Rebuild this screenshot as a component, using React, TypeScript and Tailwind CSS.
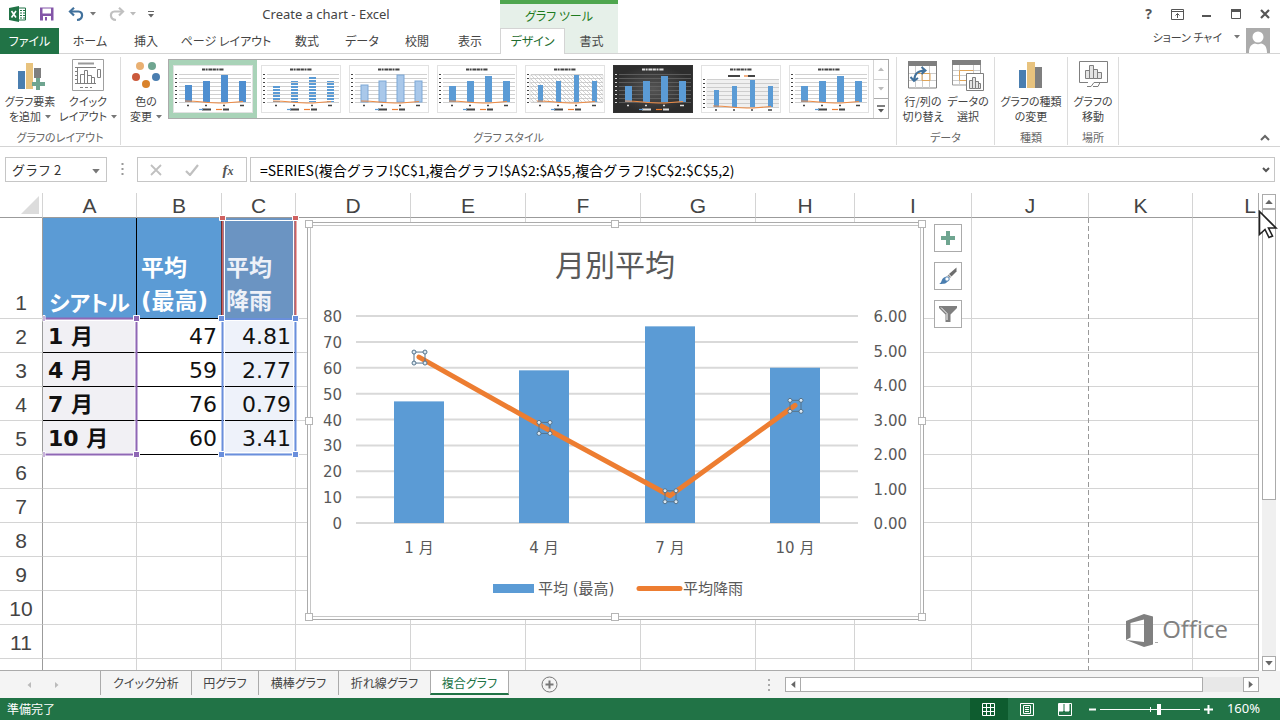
import * as React from 'react'

const columns = [
  { name: 'A', width: 94 },
  { name: 'B', width: 85 },
  { name: 'C', width: 74 },
  { name: 'D', width: 115 },
  { name: 'E', width: 115 },
  { name: 'F', width: 115 },
  { name: 'G', width: 115 },
  { name: 'H', width: 99 },
  { name: 'I', width: 117 },
  { name: 'J', width: 117 },
  { name: 'K', width: 104 },
  { name: 'L', width: 115 },
]

const data = [
  { month: '1 月', high: 47, rain: 4.81 },
  { month: '4 月', high: 59, rain: 2.77 },
  { month: '7 月', high: 76, rain: 0.79 },
  { month: '10 月', high: 60, rain: 3.41 },
]

const ribbonTabs = [
  { label: 'ホーム', className: 'w-[62px]' },
  { label: '挿入', className: 'w-[50px]' },
  { label: 'ページ レイアウト', className: 'w-[110px]' },
  { label: '数式', className: 'w-[52px]' },
  { label: 'データ', className: 'w-[58px]' },
  { label: '校閲', className: 'w-[52px]' },
  { label: '表示', className: 'w-[54px]' },
]

const sheetTabs = [
  { label: 'クイック分析', className: 'w-[91px]' },
  { label: '円グラフ', className: 'w-[67px]' },
  { label: '横棒グラフ', className: 'w-[80px]' },
  { label: '折れ線グラフ', className: 'w-[92px]' },
]

function Caret({ className = 'h-1 w-[6px] text-[#777]' }: { className?: string }) {
  return (
    <svg viewBox="0 0 6 4" className={`inline-block shrink-0 ${className}`} aria-hidden="true">
      <path d="M0 0h6L3 3.5z" fill="currentColor" />
    </svg>
  )
}

/* ---------- Title bar ---------- */

function QuickAccess() {
  return (
    <div className="flex items-center w-[160px] shrink-0 pl-[9px]">
      <svg width="18" height="16" viewBox="0 0 18 16" aria-hidden="true">
        <path d="M9 2h7.5v12H9" fill="#fff" stroke="#217346" />
        <path d="M11 4.500h2M14 4.500h2M11 7h2M14 7h2M11 9.500h2M14 9.500h2M11 12h2M14 12h2" stroke="#217346" />
        <path d="M0 2L10 0v16L0 14z" fill="#217346" />
        <path d="M2.500 5l4.500 6.500M7 5l-4.500 6.500" stroke="#fff" strokeWidth="1.600" />
      </svg>
      <button aria-label="上書き保存" className="ml-3">
        <svg width="16" height="16" viewBox="0 0 16 16">
          <path d="M1 1.500h13.500v13H1z" fill="#8355a8" />
          <path d="M3.500 2.500h8.500v5H3.500z" fill="#fff" />
          <path d="M4 10h8v5H4z" fill="#fff" />
          <path d="M6 11h2v3.500H6z" fill="#8355a8" />
        </svg>
      </button>
      <button aria-label="元に戻す" className="ml-[13px] flex items-center gap-[5px]">
        <svg width="17" height="15" viewBox="0 0 17 15" fill="none" stroke="#41719c" strokeWidth="2.200">
          <path d="M2 4.500h8.500c5 0 5 8-1.500 8.500" />
          <path d="M6 .8L2 4.500l4 4" />
        </svg>
        <Caret />
      </button>
      <button aria-label="やり直し" className="ml-3 flex items-center gap-[5px]">
        <svg width="17" height="15" viewBox="0 0 17 15" fill="none" stroke="#c0c0c0" strokeWidth="2.200">
          <path d="M15 4.500H6.500c-5 0-5 8 1.500 8.500" />
          <path d="M11 .8l4 3.700-4 4" />
        </svg>
        <Caret className="h-1 w-[6px] text-[#bbb]" />
      </button>
      <button aria-label="クイック アクセス ツール バー" className="ml-3">
        <svg width="6" height="7" viewBox="0 0 6 7">
          <path d="M0 .5h6" stroke="#666" />
          <path d="M0 3h6L3 6.500z" fill="#666" />
        </svg>
      </button>
    </div>
  )
}

function WindowControls() {
  return (
    <div className="ml-auto flex items-center pr-px text-[#555] [&>button]:flex [&>button]:w-[29px] [&>button]:h-7 [&>button]:items-center [&>button]:justify-center">
      <button aria-label="ヘルプ" className="font-['Noto_Sans'] font-bold text-sm">?</button>
      <button aria-label="リボンの表示オプション">
        <svg width="13" height="11" viewBox="0 0 13 11" fill="none" stroke="currentColor">
          <path d="M.5.5h12v10H.5zM.5 2.500h12M6.500 9V4.500M4.500 6.500l2-2 2 2" />
        </svg>
      </button>
      <button aria-label="最小化">
        <svg width="9" height="11" viewBox="0 0 9 11"><path d="M0 7h9" stroke="currentColor" strokeWidth="2" /></svg>
      </button>
      <button aria-label="元に戻す (縮小)">
        <svg width="10" height="10" viewBox="0 0 10 10" fill="none" stroke="currentColor">
          <path d="M.5.5h9v9h-9z" />
          <path d="M0 1.500h10" strokeWidth="3" />
        </svg>
      </button>
      <button aria-label="閉じる">
        <svg width="10" height="10" viewBox="0 0 10 10"><path d="M1 1l8 8M9 1L1 9" stroke="currentColor" strokeWidth="2.200" /></svg>
      </button>
    </div>
  )
}

function Header() {
  return (
    <header className="shrink-0">
      <div className="flex h-7">
        <div className="flex w-[500px] shrink-0">
          <QuickAccess />
          <h1 className="flex-1 pr-2 text-center font-['Noto_Sans'] text-[13px] leading-7 text-[#444]">Create a chart - Excel</h1>
        </div>
        <div className="w-[118px] shrink-0 border-t-4 border-[#4ea64e] bg-[#e6f0e9] text-center text-xs leading-6 text-[#1e7b1e]">グラフ ツール</div>
        <WindowControls />
      </div>
      <div className="flex h-[26px] text-xs text-[#444]">
        <nav className="flex w-[500px] shrink-0 border-b border-[#d4d4d4]">
          <button className="-mb-px w-[59px] shrink-0 bg-[#217346] text-white">ファイル</button>
          {ribbonTabs.map((t) => (
            <button key={t.label} className={`shrink-0 whitespace-nowrap ${t.className}`}>{t.label}</button>
          ))}
        </nav>
        <button className="w-[65px] shrink-0 border-x border-t border-[#d4d4d4] bg-white pb-[2px] text-[#1e6b2e]">デザイン</button>
        <button className="w-[53px] shrink-0 border-b border-[#d4d4d4] bg-[#e6f0e9]">書式</button>
        <div className="flex flex-1 items-start justify-end border-b border-[#d4d4d4] pr-[10px]">
          <button className="flex items-center gap-3 whitespace-nowrap text-[11px] leading-[18px]">
            ショーン チャイ
            <Caret />
          </button>
          <svg width="24" height="25" viewBox="0 0 24 25" className="ml-[6px]" aria-hidden="true">
            <path d="M0 0h24v25H0z" fill="#ababab" />
            <circle cx="12" cy="9" r="5.500" fill="#fff" />
            <path d="M3 25c0-7 3-9 6-9.500 2 1 4 1 6 0 3 .5 6 2.500 6 9.500z" fill="#fff" />
          </svg>
        </div>
      </div>
    </header>
  )
}

/* ---------- Ribbon ---------- */

function Group({ label, className = '', children }: { label: string; className?: string; children: React.ReactNode }) {
  return (
    <section className={`mb-px mt-[3px] flex flex-col justify-between border-r border-[#dcdcdc] ${className}`}>
      <div className="flex pt-[2px]">{children}</div>
      <h2 className="text-center text-[11px] leading-4 text-[#666]">{label}</h2>
    </section>
  )
}

type BigButtonProps = { lines: [string, string]; caret?: boolean; className?: string; children: React.ReactNode }

function BigButton({ lines, caret, className = '', children }: BigButtonProps) {
  return (
    <button className={`flex shrink-0 flex-col items-center whitespace-nowrap text-[11px] leading-[15px] text-[#444] ${className}`}>
      <span className="mb-[3px] flex h-8 items-center">{children}</span>
      <span>{lines[0]}</span>
      <span className="flex items-center gap-1">
        {lines[1]}
        {caret && <Caret />}
      </span>
    </button>
  )
}

type ThumbVariant = 'solid' | 'striped' | 'pale' | 'gradient' | 'hatched' | 'dark' | 'legendTop' | 'wide'

const thumbs: ThumbVariant[] = ['solid', 'striped', 'pale', 'gradient', 'hatched', 'dark', 'legendTop', 'wide']

function Thumb({ variant }: { variant: ThumbVariant }) {
  const dark = variant === 'dark'
  const top = variant === 'legendTop'
  const ink = dark ? '#ddd' : '#444'
  const base = top ? 42 : 37
  const barWidth = variant === 'hatched' || top ? 5 : 7
  const heights = variant === 'striped' || variant === 'gradient' || dark || variant === 'wide' ? [16, 21, 26, 21] : [17, 21, 27, 21]
  const line = dark ? '#666' : '#c4c4c4'
  const fill =
    variant === 'striped' ? 'url(#thumb-stripes)' : variant === 'pale' ? '#a9c8ea' : variant === 'solid' ? '#4f8fd0' : '#5b9bd5'
  return (
    <svg width="80" height="48" viewBox="0 0 80 48" aria-hidden="true">
      <defs>
        <pattern id="thumb-stripes" width="8" height="3" patternUnits="userSpaceOnUse">
          <path d="M0 0h8v2H0z" fill="#5b9bd5" />
        </pattern>
        <pattern id="thumb-hatch" width="4" height="4" patternUnits="userSpaceOnUse">
          <path d="M0 0l4 4" stroke="#c8c8c8" strokeWidth=".8" />
        </pattern>
        <radialGradient id="thumb-dark">
          <stop offset="0" stopColor="#555" />
          <stop offset="1" stopColor="#2d2d2d" />
        </radialGradient>
      </defs>
      <rect x=".5" y=".5" width="79" height="47" fill={dark ? 'url(#thumb-dark)' : '#fff'} stroke={dark ? '#333' : '#e2e2e2'} />
      <path d="M29 4.500h22" stroke={ink} strokeWidth="2" strokeDasharray="3 .6 2 .8 4 .5" />
      {top && <path d="M5 15h73v27H5z" fill="#f0f0f0" />}
      {variant === 'hatched' && <path d="M5 10h73v27H5z" fill="url(#thumb-hatch)" stroke="#d0d0d0" strokeWidth=".6" />}
      {[0, 1, 2, 3, 4, 5, 6, 7].map((i) => (
        <g key={i}>
          <path d={`M6 ${base - i * 4 + 0.5}h72`} stroke={line} strokeWidth=".8" />
          <path d={`M2 ${base - i * 4 + 0.5}h2`} stroke={ink} />
        </g>
      ))}
      {heights.map((h, i) => (
        <rect
          key={i}
          x={15 + i * 18 - Math.floor(barWidth / 2)}
          y={base - h}
          width={barWidth}
          height={h}
          fill={fill}
          stroke={variant === 'pale' ? '#7da7d6' : 'none'}
        />
      ))}
      <path d={`M12 ${base - 1}q9 0 18 1t22 1l18-1.500`} fill="none" stroke="#ed8b45" strokeWidth="1.200" />
      {!top && <path d="M14 40.500h2M32 40.500h2M50 40.500h2M67 40.500h4" stroke={ink} strokeWidth="1.600" />}
      {top && <path d="M14 45h2M32 45h2M50 45h2M67 45h4" stroke={ink} strokeWidth="1.600" />}
      <path d={top ? 'M27 11h12M47 11h7' : 'M29 44.500h9M50 44.500h6'} stroke={ink} strokeWidth="1.800" />
      <path d={top ? 'M43 11h4' : 'M43 44.500h6'} stroke="#ed7d31" strokeWidth="1.200" />
      {!top && <path d="M26 44.500h4" stroke="#5b9bd5" strokeWidth="1.200" />}
    </svg>
  )
}

function StyleGallery() {
  return (
    <div className="ml-px flex h-[60px] border border-[#ababab]">
      {thumbs.map((variant, i) => (
        <button
          key={variant}
          aria-label={`スタイル ${i + 1}`}
          className={`flex w-[88px] shrink-0 items-center justify-center ${i === 0 ? 'bg-[#a9d3b8]' : ''}`}
        >
          <Thumb variant={variant} />
        </button>
      ))}
      <div className="flex w-[15px] flex-col border-l border-[#d4d4d4] [&>button]:flex [&>button]:flex-1 [&>button]:items-center [&>button]:justify-center">
        <button aria-label="前の行"><Caret className="h-1 w-[6px] rotate-180 text-[#bbb]" /></button>
        <button aria-label="次の行" className="border-t border-[#d4d4d4]"><Caret className="h-1 w-[6px] text-[#bbb]" /></button>
        <button aria-label="その他" className="border-t border-[#ababab]">
          <svg width="8" height="8" viewBox="0 0 8 8">
            <path d="M0 1h8" stroke="#555" strokeWidth="1.500" />
            <path d="M1 4h6L4 7.500z" fill="#555" />
          </svg>
        </button>
      </div>
    </div>
  )
}

function Ribbon() {
  return (
    <div className="flex h-[93px] shrink-0 border-b border-[#d4d4d4]">
      <Group label="グラフのレイアウト" className="w-[121px]">
        <BigButton lines={['グラフ要素', 'を追加']} caret className="w-[60px]">
          <svg width="30" height="30" viewBox="0 0 30 30">
            <path d="M3 11h7v18H3z" fill="#4a7eb0" />
            <path d="M11 3h7v26h-7z" fill="#e8c37e" />
            <path d="M19 8h7v10h-7z" fill="#7f7f7f" />
            <path d="M21 18h4v4h5v4h-5v4h-4v-4h-4v-4h4z" fill="#6fa590" />
          </svg>
        </BigButton>
        <BigButton lines={['クイック', 'レイアウト']} caret className="w-[56px]">
          <svg width="32" height="32" viewBox="0 0 32 32" fill="none" stroke="#7f7f7f">
            <path d="M.5.5h31v31H.5z" stroke="#a0a0a0" />
            <path d="M6 4.500h16" strokeWidth="2" stroke="#999" />
            <path d="M3 8.500h21M3 12.500h2M3 16.500h2M3 20.500h2M3 24.500h21M5.500 9v15" />
            <path d="M8.500 15.500h4v9h-4zM12.500 11.500h3v13h-3zM15.500 16.500h4v8h-4zM19.500 18.500h3v6h-3z" />
            <path d="M8 28.500h12" strokeDasharray="3 2" />
            <path d="M25.500 10.500h3v8h-3z" />
          </svg>
        </BigButton>
      </Group>
      <Group label="グラフ スタイル" className="w-[776px]">
        <BigButton lines={['色の', '変更']} caret className="ml-1 w-[42px]">
          <svg width="28" height="28" viewBox="0 0 28 28">
            <circle cx="8" cy="5" r="4" fill="#e9b072" />
            <circle cx="20" cy="5" r="4" fill="#6fa590" />
            <circle cx="4" cy="16" r="4" fill="#cb5a3c" />
            <circle cx="24" cy="16" r="4" fill="#4a7eb0" />
            <circle cx="14" cy="23" r="4" fill="#d9822b" />
          </svg>
        </BigButton>
        <StyleGallery />
      </Group>
      <Group label="データ" className="w-[98px]">
        <BigButton lines={['行/列の', '切り替え']} className="w-[52px]">
          <svg width="30" height="28" viewBox="0 0 30 28" fill="none">
            <path d="M.5 1v26h28V1" stroke="#7f7f7f" />
            <path d="M0 0h29v5H0z" fill="#7f7f7f" />
            <path d="M1 12.500h27M1 19.500h27M7.500 5v22M14.500 5v22M21.500 5v22" stroke="#ccc" />
            <path d="M14 12.500h8v7h-8zM7.500 12.500h7" stroke="#e0a558" />
            <path d="M6 19c1-7 4-9 11-9.500M13.500 6l4 3.500-4 3.500M2.500 16l3.500 4 4-3" stroke="#41719c" strokeWidth="2" />
          </svg>
        </BigButton>
        <BigButton lines={['データの', '選択']} className="w-[38px]">
          <svg width="32" height="31" viewBox="0 0 32 31" fill="none">
            <path d="M.5 1v24h14M28.500 1v12" stroke="#999" />
            <path d="M0 0h29v5H0z" fill="#7f7f7f" />
            <path d="M1 10.500h27M1 15.500h14M1 20.500h14M7.500 5v20M21.500 5v8" stroke="#ccc" />
            <path d="M14 20.500H7.500v-10h14" stroke="#e0a558" />
            <path d="M14.500 13.500h17v17h-17z" fill="#fff" stroke="#7f7f7f" />
            <path d="M17.500 20.500h3v8h-3zM20.500 17.500h3v11h-3zM23.500 21.500h3v7h-3zM26.500 23.500h2v5h-2z" fill="#e4e4e4" stroke="#7f7f7f" />
          </svg>
        </BigButton>
      </Group>
      <Group label="種類" className="w-[73px]">
        <BigButton lines={['グラフの種類', 'の変更']} className="w-[72px]">
          <svg width="24" height="28" viewBox="0 0 24 28">
            <path d="M0 9h7v18H0z" fill="#4a7eb0" />
            <path d="M8 1h8v26H8z" fill="#e8c37e" />
            <path d="M16 6h7v21h-7z" fill="#7f7f7f" />
          </svg>
        </BigButton>
      </Group>
      <Group label="場所" className="w-[51px]">
        <BigButton lines={['グラフの', '移動']} className="w-[50px]">
          <svg width="29" height="28" viewBox="0 0 29 28" fill="none" stroke="#7f7f7f">
            <path d="M9 21.500H.5V.5h28v21H21" />
            <path d="M6.500 9.500h4v8h-4zM10.500 4.500h4v13h-4zM14.500 8.500h4v9h-4zM18.500 11.500h4v6h-4z" fill="#e4e4e4" />
            <path d="M8 25.500h4l3-4h6l-2 4h-5" />
          </svg>
        </BigButton>
      </Group>
      <button aria-label="リボンを折りたたむ" className="ml-auto self-end px-[10px] pb-1">
        <svg width="10" height="8" viewBox="0 0 10 8"><path d="M1 6l4-4 4 4" fill="none" stroke="#666" strokeWidth="2" /></svg>
      </button>
    </div>
  )
}

/* ---------- Formula bar ---------- */

function FormulaBar() {
  return (
    <div className="flex h-[46px] shrink-0 items-start px-[5px] pt-[10px] text-[13px] text-[#333] [font-feature-settings:normal]">
      <div className="flex h-[25px] w-[102px] items-center border border-[#c6c6c6] pr-1">
        <input aria-label="名前ボックス" defaultValue="グラフ 2" className="min-w-0 flex-1 pl-[6px] text-[13px] outline-none" />
        <button aria-label="名前の一覧" className="px-[2px]"><Caret className="h-[5px] w-2 text-[#777]" /></button>
      </div>
      <svg width="3" height="13" viewBox="0 0 3 13" className="ml-[14px] mt-[6px]" aria-hidden="true">
        <path d="M1.500 0v13" stroke="#999" strokeWidth="2" strokeDasharray="2 3" />
      </svg>
      <div className="ml-[13px] flex h-[25px] w-[110px] items-center border border-[#c6c6c6] [&>button]:flex [&>button]:flex-1 [&>button]:justify-center">
        <button aria-label="キャンセル">
          <svg width="12" height="12" viewBox="0 0 12 12"><path d="M1 1l10 10M11 1L1 11" stroke="#c0c0c0" strokeWidth="1.800" /></svg>
        </button>
        <button aria-label="入力">
          <svg width="14" height="12" viewBox="0 0 14 12"><path d="M1 7l4 4 8-10" fill="none" stroke="#c0c0c0" strokeWidth="2.200" /></svg>
        </button>
        <button aria-label="関数の挿入" className="items-baseline font-['Liberation_Serif'] text-[15px] font-bold italic leading-5 text-[#555]">
          f<span className="text-xs">x</span>
        </button>
      </div>
      <div className="ml-[3px] flex h-[25px] flex-1 items-center border border-[#c6c6c6]">
        <input
          aria-label="数式バー"
          defaultValue="=SERIES(複合グラフ!$C$1,複合グラフ!$A$2:$A$5,複合グラフ!$C$2:$C$5,2)"
          className="min-w-0 flex-1 pl-[9px] text-sm text-black outline-none"
        />
        <button aria-label="数式バーの展開" className="px-1">
          <svg width="8" height="6" viewBox="0 0 8 6"><path d="M1 1l3 3 3-3" fill="none" stroke="#555" strokeWidth="2" /></svg>
        </button>
      </div>
    </div>
  )
}

/* ---------- Sheet ---------- */

function Row({ n, children, filled = 0 }: { n: number; children?: React.ReactNode; filled?: number }) {
  return (
    <tr className={n === 1 ? 'h-[101px]' : 'h-[34px]'}>
      <th scope="row" className="border-b border-r border-b-[#d4d4d4] border-r-[#9b9b9b] p-0 align-bottom text-[21px] font-normal leading-[30px] text-[#444]">{n}</th>
      {children}
      {columns.slice(filled).map((c) => (
        <td key={c.name} className={`border-b border-[#d4d4d4] p-0 ${c.name === 'J' ? '' : 'border-r'}`} />
      ))}
    </tr>
  )
}

function Grid() {
  return (
    <table className="w-[1308px] table-fixed border-separate border-spacing-0 [&_th]:font-['Liberation_Sans']">
      <colgroup>
        <col style={{ width: 43 }} />
        {columns.map((c) => (
          <col key={c.name} style={{ width: c.width }} />
        ))}
      </colgroup>
      <thead>
        <tr className="h-[25px]">
          <td className="border-b border-r border-b-[#9b9b9b] border-r-[#d4d4d4] p-0">
            <svg width="18" height="18" viewBox="0 0 18 18" className="ml-[21px]" aria-hidden="true"><path d="M18 0v18H0z" fill="#dcdcdc" /></svg>
          </td>
          {columns.map((c) => (
            <th key={c.name} scope="col" className="border-b border-r border-b-[#9b9b9b] border-r-[#d4d4d4] p-0 pt-[2px] text-[21px] font-normal leading-[22px] text-[#444]">{c.name}</th>
          ))}
        </tr>
      </thead>
      <tbody className="font-['DejaVu_Sans','Noto_Sans_CJK_JP',sans-serif] text-[22px] leading-[31px] text-[#111]">
        <Row n={1} filled={3}>
          <td className="border-r border-black bg-[#5b9bd5] p-0 pl-[6px] align-bottom font-bold text-white">シアトル</td>
          <td className="border-b border-r border-black bg-[#5b9bd5] p-0 pl-1 align-bottom text-[23px] font-bold leading-[33px] text-white">平均<br />(最高)</td>
          <td className="border-b border-[#6b94c2] bg-[#6b94c2] p-0 pl-1 align-bottom text-[23px] font-bold leading-[33px] text-[#eef1f8]">平均<br />降雨</td>
        </Row>
        {data.map((d, i) => (
          <Row key={d.month} n={i + 2} filled={3}>
            <td className="border-b border-black bg-[#f1f0f4] p-0 pl-[5px] pt-[2px] font-bold">{d.month}</td>
            <td className="border-b border-black p-0 pr-[5px] pt-[2px] text-right">{d.high}</td>
            <td className="border-b border-black bg-[#eef2fa] p-0 pr-[5px] pt-[2px] text-right">{d.rain.toFixed(2)}</td>
          </Row>
        ))}
        {[6, 7, 8, 9, 10, 11, 12].map((n) => (
          <Row key={n} n={n} />
        ))}
      </tbody>
    </table>
  )
}

// Coloured outlines around the ranges that feed the selected series
function RangeOutlines() {
  return (
    <svg width="300" height="270" viewBox="0 0 300 270" className="pointer-events-none absolute left-0 top-0" fill="none" aria-hidden="true">
      <path d="M224.500 126V27.500h69V126" stroke="#fff" />
      <path d="M222.500 125V27M295.500 125V27" stroke="#cf6160" strokeWidth="2" />
      <path d="M44 127.500h91v133H44M224.500 127.500h69v132h-69z" stroke="#fff" />
      <path d="M43 125.500h93.500v136H43" stroke="#8f67b5" strokeWidth="2" />
      <path d="M222.500 126h73v135.500h-73z" stroke="#6a8fdc" strokeWidth="2" />
      <g stroke="#fff">
        <path d="M219.500 22.500h6v5h-6zM292.500 22.500h6v5h-6z" fill="#cf6160" />
        <path d="M133.500 122.500h6v6h-6zM133.500 258.500h6v6h-6zM43 122.500h2v6h-2zM43 258.500h2v6h-2z" fill="#8f67b5" />
        <path d="M218.500 122.500h6v6h-6zM292.500 122.500h6v6h-6zM218.500 258.500h6v6h-6zM292.500 258.500h6v6h-6z" fill="#6a8fdc" />
      </g>
    </svg>
  )
}

// Plot area: x 49-551, y 94 (max) - 301 (zero)
const centers = [112, 237, 363, 488]
const yHigh = (v: number) => 301 - (v / 80) * 207
const yRain = (v: number) => 301 - (v / 6) * 207

function Chart() {
  const handles = [[2, 2], [308, 2], [615, 2], [2, 199], [615, 199], [2, 395], [308, 395], [615, 395]]
  return (
    <svg
      width="618"
      height="398"
      viewBox="0 0 618 398"
      role="img"
      aria-label="月別平均"
      className="absolute left-[307px] top-[29px] overflow-visible font-['DejaVu_Sans','Noto_Sans_CJK_JP',sans-serif] text-[15px]"
    >
      <path d="M.5.500h616v397H.5z" fill="#fff" stroke="#ababab" />
      <path d="M3.500 3.500h610v391H3.500z" fill="none" stroke="#c6c6c6" />
      {handles.map(([x, y]) => (
        <rect key={`${x}-${y}`} x={x - 3.5} y={y - 3.5} width="7" height="7" fill="#fff" stroke="#b5b5b5" />
      ))}
      <text x="308" y="54" textAnchor="middle" fill="#595959" fontSize="30">月別平均</text>
      <g fill="#595959">
        {[0, 10, 20, 30, 40, 50, 60, 70, 80].map((v) => (
          <React.Fragment key={v}>
            <path d={`M49 ${yHigh(v)}h502`} stroke="#d9d9d9" strokeWidth="2" />
            <text x="35" y={yHigh(v) + 6} textAnchor="end">{v}</text>
          </React.Fragment>
        ))}
        {[0, 1, 2, 3, 4, 5, 6].map((v) => (
          <text key={v} x="600" y={yRain(v) + 6} textAnchor="end">{v.toFixed(2)}</text>
        ))}
        {data.map((d, i) => (
          <text key={d.month} x={centers[i]} y="331" textAnchor="middle">{d.month}</text>
        ))}
      </g>
      {data.map((d, i) => (
        <rect key={d.month} x={centers[i] - 25} y={yHigh(d.high)} width="50" height={301 - yHigh(d.high)} fill="#5b9bd5" />
      ))}
      <polyline
        points={data.map((d, i) => `${centers[i]},${yRain(d.rain)}`).join(' ')}
        fill="none"
        stroke="#ed7d31"
        strokeWidth="5"
        strokeLinecap="round"
        strokeLinejoin="round"
      />
      {data.map((d, i) => {
        const y = yRain(d.rain)
        return (
          <g key={d.month} stroke="#56748c">
            <rect x={centers[i] - 5} y={y - 5} width="11" height="11" fill="none" />
            {[[-5, -5], [6, -5], [-5, 6], [6, 6]].map(([dx, dy]) => (
              <circle key={`${dx}${dy}`} cx={centers[i] + dx} cy={y + dy} r="2" fill="#dce9f3" />
            ))}
          </g>
        )
      })}
      <path d="M186 362h41v9h-41z" fill="#5b9bd5" />
      <path d="M332 366.500h41" stroke="#ed7d31" strokeWidth="5" strokeLinecap="round" />
      <text x="231" y="372" fill="#595959">平均 (最高)</text>
      <text x="376" y="372" fill="#595959">平均降雨</text>
    </svg>
  )
}

function ChartButtons() {
  return (
    <div className="absolute left-[934px] top-[31px] flex flex-col gap-[10px] [&>button]:flex [&>button]:size-7 [&>button]:items-center [&>button]:justify-center [&>button]:border [&>button]:border-[#ababab] [&>button]:bg-white">
      <button aria-label="グラフ要素">
        <svg width="14" height="14" viewBox="0 0 14 14"><path d="M5 0h4v5h5v4H9v5H5V9H0V5h5z" fill="#6fa590" /></svg>
      </button>
      <button aria-label="グラフ スタイル">
        <svg width="18" height="18" viewBox="0 0 18 18">
          <path d="M17.500.5v4l-5 5-2.500-2.500z" fill="#6d6d6d" />
          <path d="M9.500 7.500l2.500 2.500-1 1-2.500-2.500z" fill="#8a8a8a" />
          <path d="M0 17c3-1 2-5 5-6.500 3-1 5 1.500 3.500 4-1.500 2.500-5 2.500-8.500 2.500z" fill="#4a7eb0" />
          <circle cx="8" cy="12" r="2.200" fill="#fff" stroke="#4a7eb0" />
        </svg>
      </button>
      <button aria-label="グラフ フィルター">
        <svg width="18" height="17" viewBox="0 0 18 17">
          <path d="M0 0h18v2l-6.500 6.500V16h-5V8.500L0 2z" fill="#7f7f7f" />
          <path d="M2 1.500l6 6V14" fill="none" stroke="#fff" />
        </svg>
      </button>
    </div>
  )
}

function Watermark() {
  return (
    <div className="absolute bottom-[22px] right-[30px] flex items-center gap-1 text-[#808080]">
      <svg width="32" height="33" viewBox="0 0 32 33" aria-hidden="true">
        <path d="M0 7L18 0l9 2.500v28L18 33 0 26l18 2V5.500L4.500 9v14.500L0 26z" fill="#808080" />
        <path d="M29 28.500h3" stroke="#aaa" />
      </svg>
      <span className="pb-[3px] font-['Open_Sans'] text-2xl leading-8">Office</span>
    </div>
  )
}

function Scrollbar() {
  return (
    <div className="flex w-[21px] shrink-0 flex-col bg-white pl-[3px] pr-1 pt-px">
      <button aria-label="上へスクロール" className="flex h-[15px] items-center justify-center border border-[#ababab]">
        <Caret className="h-[5px] w-2 rotate-180 text-[#666]" />
      </button>
      <div className="flex-1 bg-[#f0f0f0]">
        <div className="h-[65%] border border-[#ababab] bg-white" />
      </div>
      <button aria-label="下へスクロール" className="flex h-[15px] items-center justify-center border border-[#ababab]">
        <Caret className="h-[5px] w-2 text-[#666]" />
      </button>
    </div>
  )
}

function Sheet() {
  return (
    <main className="relative flex min-h-0 flex-1">
      <div className="relative flex-1 overflow-hidden border-b border-r border-[#ababab]">
        <Grid />
        {/* Page break */}
        <div className="absolute bottom-0 left-[1088px] top-[25px] w-px bg-[repeating-linear-gradient(#999_0_5px,transparent_5px_8px)]" />
        <RangeOutlines />
        <Chart />
        <ChartButtons />
        <Watermark />
      </div>
      <Scrollbar />
      {/* Mouse pointer */}
      <svg width="20" height="29" viewBox="0 0 20 29" className="absolute right-[2px] top-[17px]" aria-hidden="true">
        <path d="M1.500 1.500v23l5.500-5 4 8 3.500-1.500-4-8h7.500z" fill="#fff" stroke="#222" strokeWidth="1.600" />
      </svg>
    </main>
  )
}

/* ---------- Bottom bars ---------- */

function SheetTabs() {
  return (
    <div className="flex h-[27px] shrink-0 items-start bg-[#f4f4f4] text-xs text-[#444]">
      <div className="flex h-6 w-[100px] shrink-0 items-center gap-[22px] pl-[26px]">
        <button aria-label="前のシート"><Caret className="h-1 w-[6px] rotate-90 text-[#bbb]" /></button>
        <button aria-label="次のシート"><Caret className="h-1 w-[6px] -rotate-90 text-[#bbb]" /></button>
      </div>
      {sheetTabs.map((t) => (
        <button key={t.label} className={`h-6 shrink-0 whitespace-nowrap border-l border-[#ababab] ${t.className}`}>{t.label}</button>
      ))}
      <button className="-mt-px h-[25px] w-[79px] shrink-0 whitespace-nowrap border-x border-b-2 border-x-[#ababab] border-b-[#217346] bg-white pt-[2px] text-[#217346]">複合グラフ</button>
      <button aria-label="新しいシート" className="ml-8 mt-[5px]">
        <svg width="17" height="17" viewBox="0 0 17 17" fill="none" stroke="#777">
          <circle cx="8.500" cy="8.500" r="7.500" />
          <path d="M8.500 4.500v8M4.500 8.500h8" strokeWidth="2" />
        </svg>
      </button>
      <div className="ml-auto mt-[6px] flex items-center pr-[21px]">
        <svg width="2" height="12" viewBox="0 0 2 12" className="mr-[15px]" aria-hidden="true">
          <path d="M1 0v12" stroke="#aaa" strokeWidth="2" strokeDasharray="2 3" />
        </svg>
        <div className="flex h-[15px] w-[474px] bg-[#e8e8e8]">
          <button aria-label="左へスクロール" className="flex w-4 shrink-0 items-center justify-center border border-[#ababab] bg-white"><Caret className="h-[5px] w-2 rotate-90 text-[#666]" /></button>
          <div className="-ml-px w-[403px] border border-[#ababab] bg-white" />
          <button aria-label="右へスクロール" className="ml-auto flex w-4 shrink-0 items-center justify-center border border-[#ababab] bg-white"><Caret className="h-[5px] w-2 -rotate-90 text-[#666]" /></button>
        </div>
      </div>
    </div>
  )
}

function StatusBar() {
  return (
    <footer className="flex h-[22px] shrink-0 items-center bg-[#217346] pl-[7px] pr-5 text-xs text-white">
      <span>準備完了</span>
      <div className="ml-auto flex h-full [&>button]:flex [&>button]:w-[38px] [&>button]:items-center [&>button]:justify-center">
        <button aria-label="標準" className="bg-[#0e5c2f]">
          <svg width="13" height="13" viewBox="0 0 13 13" fill="none" stroke="#fff"><path d="M.5.5h12v12H.5zM4.500 0v13M8.500 0v13M0 4.500h13M0 8.500h13" /></svg>
        </button>
        <button aria-label="ページ レイアウト">
          <svg width="14" height="13" viewBox="0 0 14 13" fill="none" stroke="#fff"><path d="M.5.5h13v12H.5zM3.500 2.500h7v8h-7zM5 4.500h4M5 6.500h4M5 8.500h4" /></svg>
        </button>
        <button aria-label="改ページ プレビュー">
          <svg width="14" height="13" viewBox="0 0 14 13" fill="none" stroke="#fff">
            <path d="M.5.5h13v12H.5z" />
            <path d="M1 1h4v7H1zM7 1h4v7H7z" fill="#fff" />
          </svg>
        </button>
      </div>
      <button aria-label="縮小" className="ml-[5px]">
        <svg width="7" height="9" viewBox="0 0 7 9"><path d="M0 4.500h7" stroke="#fff" strokeWidth="2" /></svg>
      </button>
      <div className="relative mx-[4px] flex w-[100px] items-center">
        <input
          type="range"
          aria-label="ズーム"
          min="0"
          max="100"
          defaultValue="60"
          className="h-px w-full appearance-none bg-white [&::-webkit-slider-thumb]:h-[11px] [&::-webkit-slider-thumb]:w-[4px] [&::-webkit-slider-thumb]:appearance-none [&::-webkit-slider-thumb]:bg-white"
        />
        <span className="pointer-events-none absolute left-1/2 h-[5px] w-px bg-white" />
      </div>
      <button aria-label="拡大">
        <svg width="9" height="9" viewBox="0 0 9 9"><path d="M0 4.500h9M4.500 0v9" stroke="#fff" strokeWidth="2" /></svg>
      </button>
      <button className="ml-[14px] font-['Noto_Sans'] text-[13px]">160%</button>
    </footer>
  )
}

export default function App() {
  return (
    <div className="flex h-screen flex-col overflow-hidden bg-white font-['Noto_Sans_CJK_JP',sans-serif] [font-feature-settings:'palt']">
      <Header />
      <Ribbon />
      <FormulaBar />
      <Sheet />
      <SheetTabs />
      <StatusBar />
    </div>
  )
}
